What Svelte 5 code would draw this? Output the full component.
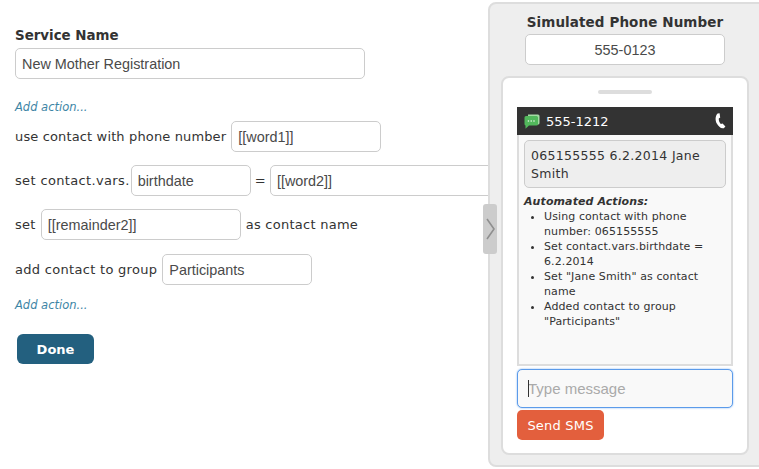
<script>
  const actions = [
    'Using contact with phone number: 065155555',
    'Set contact.vars.birthdate = 6.2.2014',
    'Set "Jane Smith" as contact name',
    'Added contact to group "Participants"'
  ];
</script>

<div class="page">
  <main class="editor">
    <label class="title" for="svc">Service Name</label>
    <input id="svc" class="field name" value="New Mother Registration" />
    <a class="add first" href="#a">Add action...</a>
    <div class="row r1">
      <span>use contact with phone number</span>
      <input class="field w150" value="[[word1]]" />
    </div>
    <div class="row r2">
      <span>set contact.vars.</span>
      <input class="field w120" value="birthdate" />
      <span class="eq">=</span>
      <input class="field wide" value="[[word2]]" />
    </div>
    <div class="row r3">
      <span>set</span>
      <input class="field w200" value="[[remainder2]]" />
      <span>as contact name</span>
    </div>
    <div class="row r4">
      <span>add contact to group</span>
      <input class="field w150" value="Participants" />
    </div>
    <a class="add second" href="#b">Add action...</a>
    <button class="done">Done</button>
  </main>

  <aside class="panel">
    <div class="handle">
      <svg width="14" height="24" viewBox="0 0 14 24"><path d="M4 2 L11 12 L4 22" fill="none" stroke="#8f8f8f" stroke-width="1.6"/></svg>
    </div>
    <div class="sim-title">Simulated Phone Number</div>
    <input class="field sim-input" value="555-0123" />
    <div class="phone">
      <div class="speaker"></div>
      <div class="header">
        <svg class="chat" width="16" height="15" viewBox="0 0 16 15">
          <path d="M4 0.5 H14 Q15.5 0.5 15.5 2 V9 Q15.5 10.5 14 10.5 H4 Z" fill="#a3dba3"/>
          <path d="M2 2 H12.5 Q14 2 14 3.5 V10 Q14 11.5 12.5 11.5 H5 L1.5 14.8 V11.5 Q0.5 11.3 0.5 10 V3.5 Q0.5 2 2 2 Z" fill="#52b85c"/>
          <circle cx="4.4" cy="7" r="0.8" fill="#e8f6e8"/><circle cx="7.2" cy="7" r="0.8" fill="#e8f6e8"/><circle cx="10" cy="7" r="0.8" fill="#e8f6e8"/>
        </svg>
        <span class="num">555-1212</span>
        <svg class="call" width="11" height="16" viewBox="0 0 11 16">
          <path d="M2.6 0.4 L4.6 0.2 L5.2 4.4 L3.8 5.4 C3.6 7.4 4.4 9.4 5.8 11 L7.6 10.4 L10.4 13.4 L8.8 15.2 C6 16 3.4 13.6 1.8 10.6 C0.2 7.4 0 3 2.6 0.4 Z" fill="#fff"/>
        </svg>
      </div>
      <div class="messages">
        <div class="bubble">065155555 6.2.2014 Jane Smith</div>
        <div class="auto">Automated Actions:</div>
        <ul>
          {#each actions as a}<li>{a}</li>{/each}
        </ul>
      </div>
      <div class="compose">
        <input class="message" placeholder="Type message" />
        <span class="caret"></span>
      </div>
      <button class="send">Send SMS</button>
    </div>
  </aside>
</div>

<style>
  :global(body) { margin: 0; background: #fff; }
  .page {
    display: flex;
    width: 759px;
    height: 469px;
    overflow: hidden;
    font-family: "DejaVu Sans", Verdana, sans-serif;
    font-size: 13px;
    color: #333;
  }
  .editor {
    flex: none;
    box-sizing: border-box;
    width: 488px;
    padding: 28px 0 0 15px;
    display: flex;
    flex-direction: column;
    align-items: flex-start;
  }
  .field {
    box-sizing: border-box;
    height: 31px;
    border: 1px solid #ccc;
    border-radius: 5px;
    padding: 0 6px;
    background: #fff;
    font-family: "Liberation Sans", Arial, sans-serif;
    font-size: 14.4px;
    color: #4a4a4a;
    outline: none;
    flex: none;
  }
  .title { font-weight: bold; font-size: 13.4px; line-height: 16px; color: #333; }
  .name { width: 350px; margin-top: 4px; }
  .add {
    font-style: italic;
    font-size: 11.5px;
    line-height: 14px;
    color: #3d85a5;
    text-decoration: none;
  }
  .add.first { margin-top: 21px; }
  .add.second { margin-top: 13px; }
  .row { display: flex; align-items: center; height: 31px; white-space: nowrap; }
  .r1 { margin-top: 7px; gap: 5px; letter-spacing: 0.14px; }
  .r2 { margin-top: 13px; gap: 1px; letter-spacing: 0.35px; }
  .r3 { margin-top: 13px; gap: 5px; letter-spacing: 0.26px; }
  .r4 { margin-top: 14px; gap: 5px; letter-spacing: 0.3px; }
  .w150 { width: 150px; }
  .w120 { width: 120px; }
  .w200 { width: 200px; }
  .wide { width: 270px; }
  .eq { margin: 0 3px; }
  .done {
    margin: 22px 0 0 2px;
    width: 77px;
    height: 30px;
    border: 0;
    border-radius: 6px;
    background: #23607f;
    color: #fff;
    font: bold 13px "DejaVu Sans", Verdana, sans-serif;
  }
  .panel {
    flex: none;
    position: relative;
    z-index: 1;
    box-sizing: border-box;
    width: 290px;
    height: 465px;
    margin-top: 2px;
    background: #eee;
    border: 2px solid #ddd;
    border-radius: 8px;
    padding: 9px 0 0 11px;
  }
  .handle {
    position: absolute;
    left: -7px;
    top: 200px;
    width: 14px;
    height: 50px;
    background: #ccc;
    border-radius: 3px;
    display: flex;
    align-items: center;
    justify-content: center;
  }
  .sim-title {
    width: 248px;
    text-align: center;
    font-weight: bold;
    font-size: 13.5px;
    letter-spacing: 0.1px;
    line-height: 18px;
    color: #333;
  }
  .sim-input {
    display: block;
    width: 200px;
    margin: 3px 0 0 24px;
    text-align: center;
  }
  .phone {
    box-sizing: border-box;
    width: 248px;
    height: 379px;
    margin-top: 11px;
    padding: 0 14px;
    background: #fff;
    border: 2px solid #ddd;
    border-radius: 8px;
  }
  .speaker {
    width: 54px;
    height: 4px;
    margin: 12px auto 0;
    background: #ddd;
    border-radius: 2px;
  }
  .header {
    display: flex;
    align-items: center;
    height: 28px;
    margin-top: 13px;
    padding: 0 7px;
    background: #333;
    color: #fff;
  }
  .num { margin-left: 6px; padding-top: 1px; flex: 1; font-size: 13px; }
  .messages {
    box-sizing: border-box;
    height: 231px;
    padding: 5px 5px 0;
    background: #f9f9f9;
    border: 2px solid #ddd;
    border-top: 0;
    font-size: 11px;
    letter-spacing: 0.1px;
  }
  .bubble {
    box-sizing: border-box;
    height: 48px;
    padding: 6px 6px;
    background: #eee;
    border: 1px solid #ccc;
    border-radius: 5px;
    font-size: 12.5px;
    letter-spacing: 0.3px;
    line-height: 18px;
  }
  .auto { margin-top: 6px; font-weight: bold; font-style: italic; line-height: 15px; }
  ul { margin: 0; padding: 0 0 0 20px; line-height: 15px; }
  .compose { position: relative; margin-top: 3px; }
  .message {
    display: block;
    box-sizing: border-box;
    width: 216px;
    height: 39px;
    padding: 0 10px;
    background: #f9f9f9;
    border: 1px solid #5b9bea;
    border-radius: 5px;
    box-shadow: 0 0 2px #7db0f0;
    outline: none;
    font: 15px "Liberation Sans", Arial, sans-serif;
  }
  .message::placeholder { color: #aaa; opacity: 1; }
  .caret { position: absolute; left: 11px; top: 11px; width: 1px; height: 17px; background: #333; }
  .send {
    display: block;
    margin-top: 2px;
    width: 87px;
    height: 30px;
    border: 0;
    border-radius: 5px;
    background: #e35f3d;
    color: #fff;
    font: 13px "DejaVu Sans", Verdana, sans-serif;
    letter-spacing: 0.2px;
  }
</style>
